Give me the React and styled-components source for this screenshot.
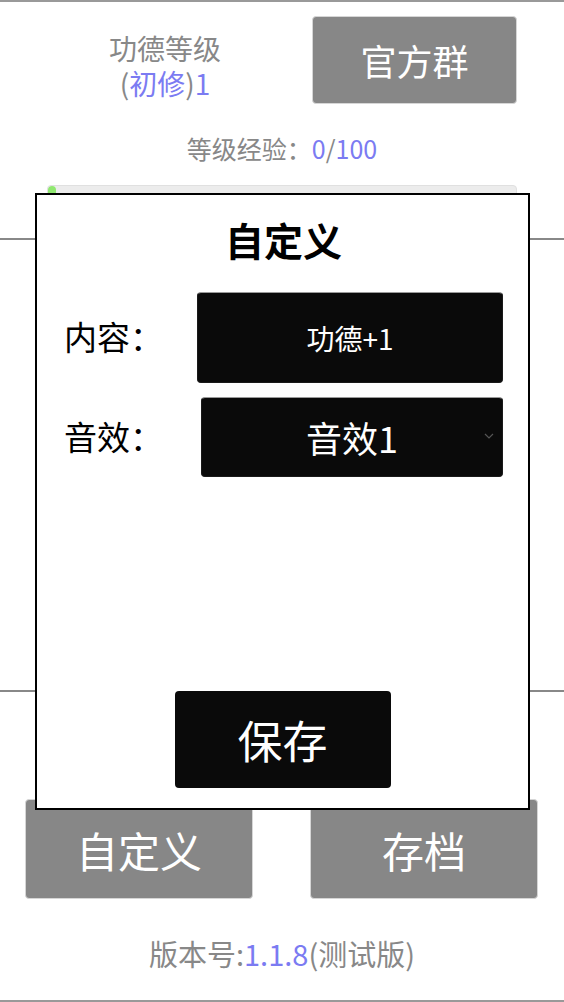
import React from "react";
import styled, { createGlobalStyle } from "styled-components";

const Global = createGlobalStyle`
  html, body { margin: 0; padding: 0; background: #fff; }
  body { font-family: "Noto Sans CJK SC", "Noto Sans", sans-serif; }
  * { box-sizing: border-box; }
`;

const Page = styled.div`
  position: relative;
  width: 564px;
  height: 1002px;
  border-top: 2px solid #999;
  display: flex;
  flex-direction: column;
  align-items: stretch;
`;

const Header = styled.div`
  display: grid;
  grid-template-columns: 1fr 205px;
  padding: 14px 47px 0 18px;
`;

const Level = styled.div`
  text-align: center;
  font-size: 28px;
  color: #888;
  padding-top: 15px;
`;

const LevelLine = styled.div`
  height: 35px;
  line-height: 35px;
`;

const Blue = styled.span`
  color: #7b7bf2;
`;

const GrayButton = styled.div`
  display: flex;
  align-items: center;
  justify-content: center;
  height: ${(p) => p.$h}px;
  width: ${(p) => (p.$w ? `${p.$w}px` : "auto")};
  background: #878787;
  border: 1px solid #d6d6d6;
  border-radius: 4px;
  color: #fff;
  font-size: ${(p) => p.$fs}px;
`;

const Exp = styled.div`
  margin-top: 29px;
  text-align: center;
  font-size: 25px;
  line-height: 30px;
  color: #888;
`;

const Bar = styled.div`
  margin: 22px 47px 0 47px;
  height: 16px;
  background: #ececec;
  border: 1px solid #e0e0e0;
  border-radius: 4px;
  overflow: hidden;
`;

const Fill = styled.div`
  height: 100%;
  background: #90e870;
  border-radius: 4px;
`;

const Stage = styled.div`
  margin-top: 37px;
  height: 454px;
  border-top: 2px solid #888;
  border-bottom: 2px solid #888;
`;

const BottomRow = styled.div`
  margin-top: 107px;
  display: flex;
  justify-content: space-between;
  padding: 0 26px 0 25px;
`;

const Version = styled.div`
  margin-top: 37px;
  text-align: center;
  font-size: 29px;
  line-height: 34px;
  color: #888;
`;

const BottomLine = styled.div`
  margin-top: auto;
  border-top: 2px solid #999;
`;

const Modal = styled.div`
  position: absolute;
  left: 35px;
  top: 191px;
  width: 495px;
  height: 617px;
  background: #fff;
  border: 2px solid #000;
  display: flex;
  flex-direction: column;
  padding: 19px 25px 20px 27px;
`;

const Title = styled.div`
  text-align: center;
  font-size: 39px;
  font-weight: 700;
  line-height: 50px;
  color: #000;
`;

const FieldRow = styled.div`
  display: flex;
  align-items: center;
  justify-content: space-between;
  margin-top: ${(p) => p.$mt}px;
`;

const Label = styled.div`
  font-size: 33px;
  color: #000;
  line-height: 40px;
  margin-top: ${(p) => p.$dy || 0}px;
`;

const DarkBox = styled.div`
  position: relative;
  width: ${(p) => p.$w}px;
  height: ${(p) => p.$h}px;
  background: #0a0a0a;
  border: 1px solid #1a1a1a;
  border-top-color: #9a9a9a;
  border-radius: 4px;
  color: #fff;
  font-size: ${(p) => p.$fs}px;
  display: flex;
  align-items: center;
  justify-content: center;
`;

const Chevron = styled.svg`
  position: absolute;
  right: 8px;
  top: 50%;
  margin-top: -4px;
`;

const SaveRow = styled.div`
  margin-top: auto;
  display: flex;
  justify-content: center;
`;

const SaveButton = styled.div`
  width: 216px;
  height: 97px;
  background: #0a0a0a;
  border-radius: 4px;
  color: #fff;
  font-size: 45px;
  display: flex;
  align-items: center;
  justify-content: center;
  margin-left: -2px;
`;

export default function App() {
  return (
    <>
      <Global />
      <Page>
        <Header>
          <Level>
            <LevelLine>功德等级</LevelLine>
            <LevelLine>
              (<Blue>初修</Blue>)<Blue>1</Blue>
            </LevelLine>
          </Level>
          <GrayButton $h={88} $fs={36}>官方群</GrayButton>
        </Header>
        <Exp>
          等级经验：<Blue>0</Blue>/<Blue>100</Blue>
        </Exp>
        <Bar>
          <Fill style={{ width: "8px" }} />
        </Bar>
        <Stage />
        <BottomRow>
          <GrayButton $h={100} $w={228} $fs={42}>自定义</GrayButton>
          <GrayButton $h={100} $w={228} $fs={42}>存档</GrayButton>
        </BottomRow>
        <Version>
          版本号:<Blue>1.1.8</Blue>(测试版)
        </Version>
        <BottomLine />

        <Modal>
          <Title>自定义</Title>
          <FieldRow $mt={28}>
            <Label $dy={-4}>内容：</Label>
            <DarkBox $w={306} $h={91} $fs={28}>功德+1</DarkBox>
          </FieldRow>
          <FieldRow $mt={14}>
            <Label $dy={-2}>音效：</Label>
            <DarkBox $w={302} $h={80} $fs={36}>
              音效1
              <Chevron width="10" height="7" viewBox="0 0 10 7">
                <path d="M1 1 L5 5 L9 1" fill="none" stroke="#555" strokeWidth="1.2" />
              </Chevron>
            </DarkBox>
          </FieldRow>
          <SaveRow>
            <SaveButton>保存</SaveButton>
          </SaveRow>
        </Modal>
      </Page>
    </>
  );
}
